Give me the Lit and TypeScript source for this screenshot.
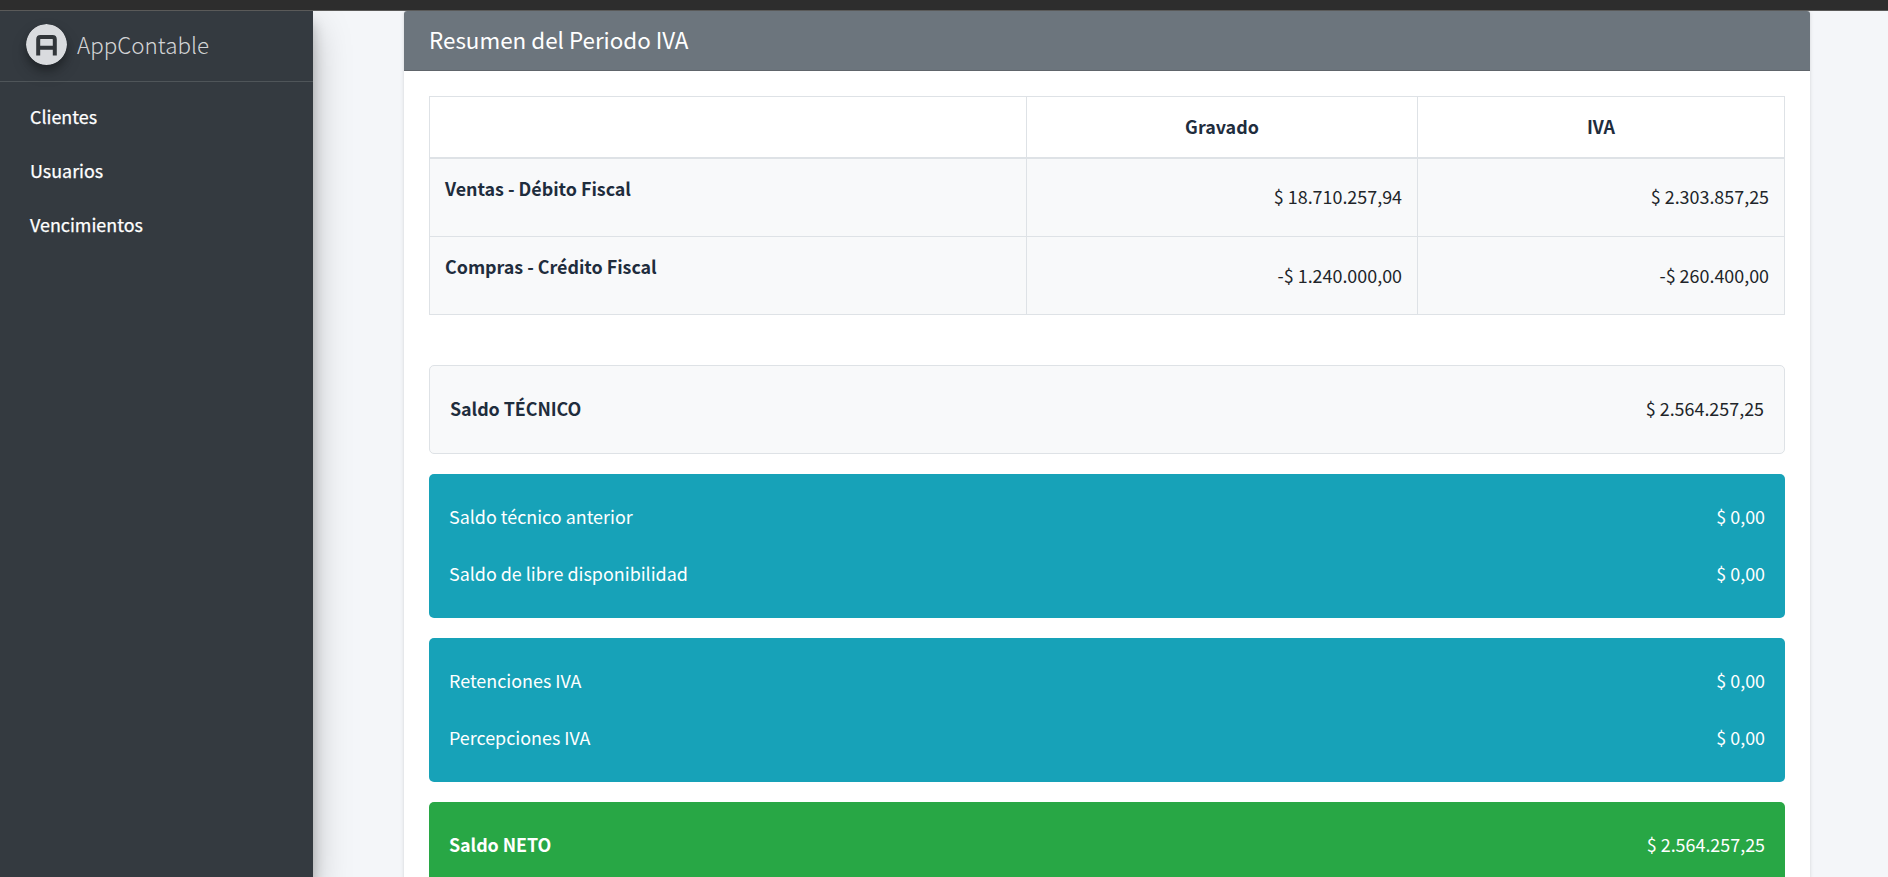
import { LitElement, html, css } from "lit";
import { customElement } from "lit/decorators.js";

interface Line {
  label: string;
  amount: string;
}

interface Panel {
  tone: string;
  strong: boolean;
  lines: Line[];
}

const NAV = ["Clientes", "Usuarios", "Vencimientos"];

const ROWS = [
  { label: "Ventas - Débito Fiscal", gravado: "$ 18.710.257,94", iva: "$ 2.303.857,25" },
  { label: "Compras - Crédito Fiscal", gravado: "-$ 1.240.000,00", iva: "-$ 260.400,00" },
];

const PANELS: Panel[] = [
  { tone: "light", strong: true, lines: [{ label: "Saldo TÉCNICO", amount: "$ 2.564.257,25" }] },
  {
    tone: "info",
    strong: false,
    lines: [
      { label: "Saldo técnico anterior", amount: "$ 0,00" },
      { label: "Saldo de libre disponibilidad", amount: "$ 0,00" },
    ],
  },
  {
    tone: "info",
    strong: false,
    lines: [
      { label: "Retenciones IVA", amount: "$ 0,00" },
      { label: "Percepciones IVA", amount: "$ 0,00" },
    ],
  },
  { tone: "success", strong: true, lines: [{ label: "Saldo NETO", amount: "$ 2.564.257,25" }] },
];

@customElement("app-sidebar")
export class AppSidebar extends LitElement {
  static styles = css`
    :host {
      display: block;
      box-sizing: border-box;
      width: 313px;
      background: #343a40;
      box-shadow: 0 17px 35px rgba(0, 0, 0, 0.25), 0 12px 12px rgba(0, 0, 0, 0.22);
    }
    .brand {
      display: flex;
      align-items: center;
      box-sizing: border-box;
      height: 71px;
      padding: 0 0 4px 26px;
      border-bottom: 1px solid #4f5559;
      color: rgba(255, 255, 255, 0.8);
      font-size: 22.4px;
      font-weight: 300;
      line-height: 30px;
    }
    .logo {
      width: 41px;
      height: 41px;
      margin-right: 10px;
      border-radius: 50%;
      box-shadow: 0 8px 16px rgba(0, 0, 0, 0.19), 0 5px 7px rgba(0, 0, 0, 0.23);
    }
    .menu {
      display: flex;
      flex-direction: column;
      gap: 4px;
      margin: 0;
      padding: 9px 10px;
      list-style: none;
    }
    .item {
      height: 50px;
      padding-left: 20px;
      color: #fff;
      font-size: 17.9px;
      -webkit-text-stroke: 0.25px #fff;
      line-height: 50px;
    }
  `;

  render() {
    return html`
      <div class="brand">
        <svg class="logo" viewBox="0 0 41 41">
          <circle cx="20.5" cy="20.5" r="20.5" fill="#d9dbde" />
          <path
            d="M12.2 31.4V15.4Q12.2 13.1 14.5 13.1H26.5Q28.8 13.1 28.8 15.4V31.4M12.2 23.8H28.8"
            fill="none"
            stroke="#32363a"
            stroke-width="4"
          />
        </svg>
        <span class="name">AppContable</span>
      </div>
      <ul class="menu">
        ${NAV.map((n) => html`<li class="item">${n}</li>`)}
      </ul>
    `;
  }
}

@customElement("balance-panel")
export class BalancePanel extends LitElement {
  static properties = { panel: { attribute: false } };
  declare panel: Panel;

  static styles = css`
    :host {
      display: block;
    }
    .panel {
      display: flex;
      flex-direction: column;
      gap: 27px;
      padding: 27px 20px 30px;
      border-radius: 5px;
      line-height: 30px;
    }
    .light {
      border: 1px solid #dee2e6;
      background: #f8f9fa;
      color: #212529;
    }
    .info {
      background: #17a2b8;
      color: #fff;
    }
    .success {
      background: #28a745;
      color: #fff;
    }
    .line {
      display: flex;
      justify-content: space-between;
    }
    .strong {
      font-weight: 700;
      letter-spacing: -0.07px;
    }
    .light .strong {
      color: #1f2d3d;
    }
  `;

  render() {
    const { tone, strong, lines } = this.panel;
    return html`<div class="panel ${tone}">
      ${lines.map(
        (l) => html`<div class="line">
          <span class=${strong ? "strong" : "plain"}>${l.label}</span>
          <span class="amount">${l.amount}</span>
        </div>`
      )}
    </div>`;
  }
}

@customElement("app-root")
export class AppRoot extends LitElement {
  static styles = css`
    :host {
      display: flex;
      flex-direction: column;
      height: 877px;
      overflow: hidden;
      background: #f4f6f9;
      color: #212529;
      font-family: "Noto Sans CJK SC", "Noto Sans", sans-serif;
      font-size: 17.9px;
      line-height: 30px;
    }
    .topbar {
      flex: none;
      box-sizing: border-box;
      height: 11px;
      border-bottom: 1px solid #5a5a59;
      background: #2d2d2d;
    }
    .body {
      display: flex;
      flex: 1;
      min-height: 0;
      overflow: hidden;
    }
    .sidebar {
      flex: none;
    }
    .content {
      flex: 1;
      padding: 0 78px 0 91px;
    }
    .card {
      height: 1000px;
      border-radius: 3px;
      background: #fff;
      box-shadow: 0 0 1px rgba(0, 0, 0, 0.1), 0 1px 4px rgba(0, 0, 0, 0.12);
    }
    .title {
      box-sizing: border-box;
      height: 60px;
      padding: 13px 25px 0;
      border-bottom: 1px solid #60656b;
      border-radius: 3px 3px 0 0;
      background: #6c757d;
      color: #fff;
      font-size: 22.4px;
      line-height: 30px;
    }
    .sheet {
      padding: 25px;
    }
    .table {
      width: 1356px;
      margin-bottom: 50px;
      border-collapse: collapse;
      table-layout: fixed;
    }
    .first {
      width: 597px;
    }
    .second {
      width: 391px;
    }
    .head,
    .key,
    .value {
      box-sizing: border-box;
      border: 1px solid #dee2e6;
      padding: 0 15px;
    }
    .head {
      height: 61px;
      padding-bottom: 2px;
      border-bottom-width: 2px;
      color: #1f2d3d;
      font-weight: 700;
    }
    .key,
    .value {
      height: 78px;
      background: #f8f9fa;
    }
    .row:first-child .key,
    .row:first-child .value {
      height: 79px;
    }
    .key {
      padding-top: 14px;
      vertical-align: top;
      color: #1f2d3d;
      text-align: left;
      font-weight: 700;
      letter-spacing: -0.03px;
    }
    .value {
      padding-bottom: 2px;
      text-align: right;
    }
    .stack {
      display: flex;
      flex-direction: column;
      gap: 20px;
    }
  `;

  render() {
    return html`
      <div class="topbar"></div>
      <div class="body">
        <app-sidebar class="sidebar"></app-sidebar>
        <main class="content">
          <section class="card">
            <div class="title">Resumen del Periodo IVA</div>
            <div class="sheet">
              <table class="table">
                <colgroup>
                  <col class="first" />
                  <col class="second" />
                  <col />
                </colgroup>
                <thead>
                  <tr>
                    <th class="head"></th>
                    <th class="head">Gravado</th>
                    <th class="head">IVA</th>
                  </tr>
                </thead>
                <tbody>
                  ${ROWS.map(
                    (r) => html`<tr class="row">
                      <th class="key">${r.label}</th>
                      <td class="value">${r.gravado}</td>
                      <td class="value">${r.iva}</td>
                    </tr>`
                  )}
                </tbody>
              </table>
              <div class="stack">
                ${PANELS.map((p) => html`<balance-panel .panel=${p}></balance-panel>`)}
              </div>
            </div>
          </section>
        </main>
      </div>
    `;
  }
}
